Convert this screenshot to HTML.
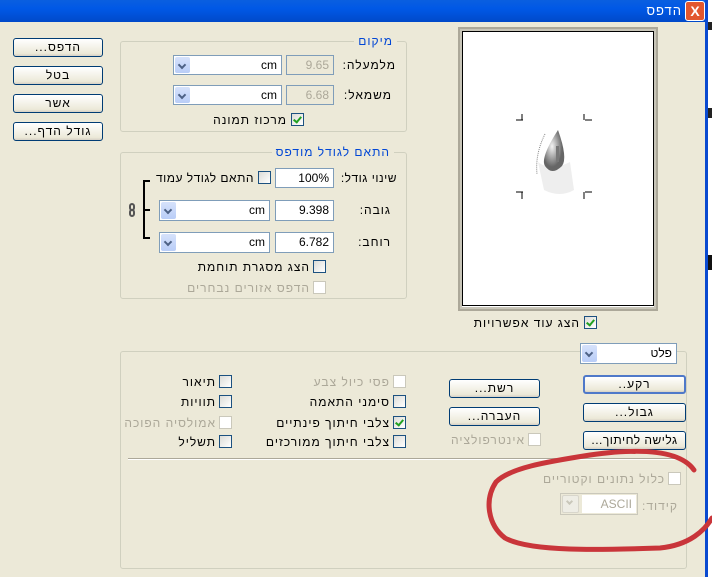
<!DOCTYPE html>
<html><head><meta charset="utf-8"><style>
*{box-sizing:border-box;margin:0;padding:0}
body{width:712px;height:577px;overflow:hidden;background:#ece9d8;font-family:"Liberation Sans","DejaVu Sans",sans-serif;font-size:12px;color:#000;position:relative}
.a{position:absolute}
.r{position:absolute;direction:rtl;white-space:nowrap;line-height:14px;letter-spacing:1px}
.btn{position:absolute;border:1px solid #003c74;border-radius:3px;background:linear-gradient(#fff,#ece9d8 85%,#d6d0c5);text-align:center;line-height:16px;direction:rtl;font-size:12px;letter-spacing:1px}
.grp{position:absolute;border:1px solid #d0d0bf;border-radius:3px}
.leg{position:absolute;background:#ece9d8;color:#0046d5;padding:0 4px;direction:rtl;line-height:14px;white-space:nowrap;letter-spacing:1px}
.tb{position:absolute;border:1px solid #7f9db9;background:#fff;text-align:right;padding-right:4px;line-height:18px}
.dis{color:#aca899}
.sel{position:absolute;border:1px solid #7f9db9;background:#fff;text-align:right;padding-right:4px;line-height:18px}
.sel i{position:absolute;left:1px;top:1px;bottom:1px;width:15px;background:linear-gradient(#d6e2fb,#b9cdf7);border-radius:2px}
.sel i:after{content:"";position:absolute;left:4px;top:5px;width:4px;height:4px;border-right:2px solid #4d6185;border-bottom:2px solid #4d6185;transform:rotate(45deg)}
.cb{position:absolute;width:13px;height:13px;border:1px solid #1c5180;background:linear-gradient(135deg,#dcdcd7,#fff)}
.cb.d{border-color:#cac8bb;background:#fff}
.cb.k:after{content:"";position:absolute;left:3px;top:1px;width:3px;height:6px;border-right:2px solid #21a121;border-bottom:2px solid #21a121;transform:rotate(40deg)}
</style></head><body>
<div class="a" style="left:0;top:0;width:706px;height:22px;background:linear-gradient(#0a5fe0,#0058e6 40%,#0049c9)"></div>
<div class="r" style="right:30px;top:4px;color:#fff;font-size:13px">הדפס</div>
<div class="a" style="left:685px;top:1px;width:20px;height:20px;border:1px solid #fff;border-radius:3px;background:#e2572f;color:#fff;font-weight:bold;text-align:center;line-height:18px;font-size:14px">X</div>
<div class="a" style="left:705px;top:0;width:3px;height:577px;background:#0a4ad0"></div>
<div class="a" style="left:708px;top:0;width:4px;height:577px;background:#fff"></div>
<div class="a" style="left:708px;top:22px;width:4px;height:8px;background:#222"></div>
<div class="a" style="left:708px;top:108px;width:4px;height:10px;background:#222"></div>
<div class="a" style="left:708px;top:255px;width:4px;height:15px;background:#111"></div>

<div class="btn" style="left:13px;top:38px;width:90px;height:19px">הדפס...</div>
<div class="btn" style="left:13px;top:66px;width:90px;height:19px">בטל</div>
<div class="btn" style="left:13px;top:94px;width:90px;height:19px">אשר</div>
<div class="btn" style="left:13px;top:122px;width:90px;height:19px">גודל הדף...</div>

<div class="grp" style="left:120px;top:41px;width:287px;height:91px"></div>
<div class="leg" style="right:315px;top:34px">מיקום</div>
<div class="sel" style="left:173px;top:55px;width:109px;height:20px">cm<i></i></div>
<div class="tb dis" style="left:286px;top:55px;width:48px;height:20px;background:#ece9d8">9.65</div>
<div class="r" style="right:316px;top:58px">מלמעלה:</div>
<div class="sel" style="left:173px;top:85px;width:109px;height:20px">cm<i></i></div>
<div class="tb dis" style="left:286px;top:85px;width:48px;height:20px;background:#ece9d8">6.68</div>
<div class="r" style="right:320px;top:88px">משמאל:</div>
<div class="cb k" style="left:291px;top:113px"></div>
<div class="r" style="right:425px;top:113px">מרכוז תמונה</div>

<div class="grp" style="left:120px;top:152px;width:287px;height:147px"></div>
<div class="leg" style="right:318px;top:145px">התאם לגודל מודפס</div>
<div class="tb" style="left:275px;top:168px;width:59px;height:20px">100%</div>
<div class="r" style="right:315px;top:171px;letter-spacing:0.5px">שינוי גודל:</div>
<div class="cb" style="left:258px;top:171px"></div>
<div class="r" style="right:458px;top:171px;letter-spacing:0.5px">התאם לגודל עמוד</div>
<div class="sel" style="left:159px;top:200px;width:111px;height:21px">cm<i></i></div>
<div class="tb" style="left:275px;top:200px;width:59px;height:21px">9.398</div>
<div class="r" style="right:321px;top:203px">גובה:</div>
<div class="sel" style="left:159px;top:232px;width:111px;height:21px">cm<i></i></div>
<div class="tb" style="left:275px;top:232px;width:59px;height:21px">6.782</div>
<div class="r" style="right:321px;top:235px">רוחב:</div>
<div class="a" style="left:143px;top:180px;width:7px;height:59px;border:2px solid #000;border-right:none"></div>
<div class="a" style="left:143px;top:209px;width:7px;height:2px;background:#000"></div>
<div class="a" style="left:129px;top:203px;width:6px;height:8px;border:2px solid #555;border-radius:3px"></div>
<div class="a" style="left:129px;top:209px;width:6px;height:8px;border:2px solid #555;border-radius:3px"></div>
<div class="cb" style="left:313px;top:260px"></div>
<div class="r" style="right:402px;top:260px">הצג מסגרת תוחמת</div>
<div class="cb d" style="left:313px;top:281px"></div>
<div class="r dis" style="right:402px;top:281px">הדפס אזורים נבחרים</div>

<div class="a" style="left:458px;top:27px;width:200px;height:284px;background:#aca899"></div>
<div class="a" style="left:460px;top:29px;width:196px;height:280px;background:#fff;border:2px solid #c8c5b8"></div>
<div class="a" style="left:462px;top:31px;width:192px;height:275px;border:1px solid #000;background:#fff"></div>
<svg class="a" style="left:510px;top:112px" width="90" height="105">
<path d="M6 8h7M12 2v6M74 2v6M75 8h7M6 80h7M12 80v7M74 80v7M75 80h7" stroke="#000" stroke-width="1" fill="none"/>
<defs><radialGradient id="g" cx="40%" cy="40%"><stop offset="0" stop-color="#f4f4f4"/><stop offset="1" stop-color="#666"/></radialGradient></defs>
<path d="M28 50 q12 10 32 0 l4 28 q-14 8 -30 0z" fill="#eee"/>
<path d="M48 18 q-18 28 -13 36 q7 10 17 0 q6 -8 -4 -36z" fill="url(#g)"/>
<rect x="46" y="34" width="3" height="16" fill="#777"/>
<path d="M35 22 q-10 20 -8 40" stroke="#888" stroke-dasharray="1 1" fill="none"/>
</svg>
<div class="cb k" style="left:584px;top:316px"></div>
<div class="r" style="right:132px;top:316px">הצג עוד אפשרויות</div>

<div class="grp" style="left:120px;top:351px;width:567px;height:218px"></div>
<div class="sel" style="left:580px;top:343px;width:97px;height:21px">פלט<i></i></div>
<div class="btn" style="left:583px;top:375px;width:103px;height:19px;border:2px solid #4f79c9;line-height:15px">רקע..</div>
<div class="btn" style="left:583px;top:403px;width:103px;height:19px">גבול...</div>
<div class="btn" style="left:583px;top:431px;width:103px;height:19px;letter-spacing:0.5px">גלישה לחיתוך...</div>
<div class="btn" style="left:449px;top:379px;width:91px;height:19px">רשת...</div>
<div class="btn" style="left:449px;top:407px;width:91px;height:19px">העברה...</div>
<div class="cb d" style="left:528px;top:433px"></div>
<div class="r dis" style="right:187px;top:433px">אינטרפולציה</div>

<div class="cb d" style="left:393px;top:375px"></div><div class="r dis" style="right:322px;top:375px">פסי כיול צבע</div>
<div class="cb" style="left:393px;top:395px"></div><div class="r" style="right:322px;top:395px">סימני התאמה</div>
<div class="cb k" style="left:393px;top:416px"></div><div class="r" style="right:322px;top:416px">צלבי חיתוך פינתיים</div>
<div class="cb" style="left:393px;top:435px"></div><div class="r" style="right:322px;top:435px">צלבי חיתוך ממורכזים</div>
<div class="cb" style="left:219px;top:375px"></div><div class="r" style="right:496px;top:375px">תיאור</div>
<div class="cb" style="left:219px;top:395px"></div><div class="r" style="right:496px;top:395px">תוויות</div>
<div class="cb d" style="left:219px;top:416px"></div><div class="r dis" style="right:496px;top:416px">אמולסיה הפוכה</div>
<div class="cb" style="left:219px;top:435px"></div><div class="r" style="right:496px;top:435px">תשליל</div>

<div class="a" style="left:128px;top:458px;width:553px;height:2px;border-top:1px solid #aca899;border-bottom:1px solid #fff"></div>
<div class="cb d" style="left:668px;top:472px"></div>
<div class="r dis" style="right:47px;top:472px">כלול נתונים וקטוריים</div>
<div class="r dis" style="right:34px;top:499px">קידוד:</div>
<div class="a" style="left:560px;top:493px;width:78px;height:22px;border:1px solid #cac8bb"></div>
<div class="a dis" style="left:582px;top:495px;width:54px;height:18px;background:#fff;text-align:right;padding-right:4px;line-height:18px">ASCII</div>
<div class="a" style="left:562px;top:495px;width:17px;height:18px;background:#eeede5;border:1px solid #d8d6cb;border-radius:2px"></div>
<div class="a" style="left:567px;top:499px;width:5px;height:5px;border-right:2px solid #c9c7ba;border-bottom:2px solid #c9c7ba;transform:rotate(45deg)"></div>

<svg class="a" style="left:0;top:0" width="712" height="577"><path d="M694 470 C680 450 640 448 590 455 C545 462 510 468 496 482 C484 500 488 525 505 538 C530 552 600 550 660 548 C690 545 705 530 712 518" fill="none" stroke="#c9353a" stroke-width="5" stroke-linecap="round"/></svg>
</body></html>
